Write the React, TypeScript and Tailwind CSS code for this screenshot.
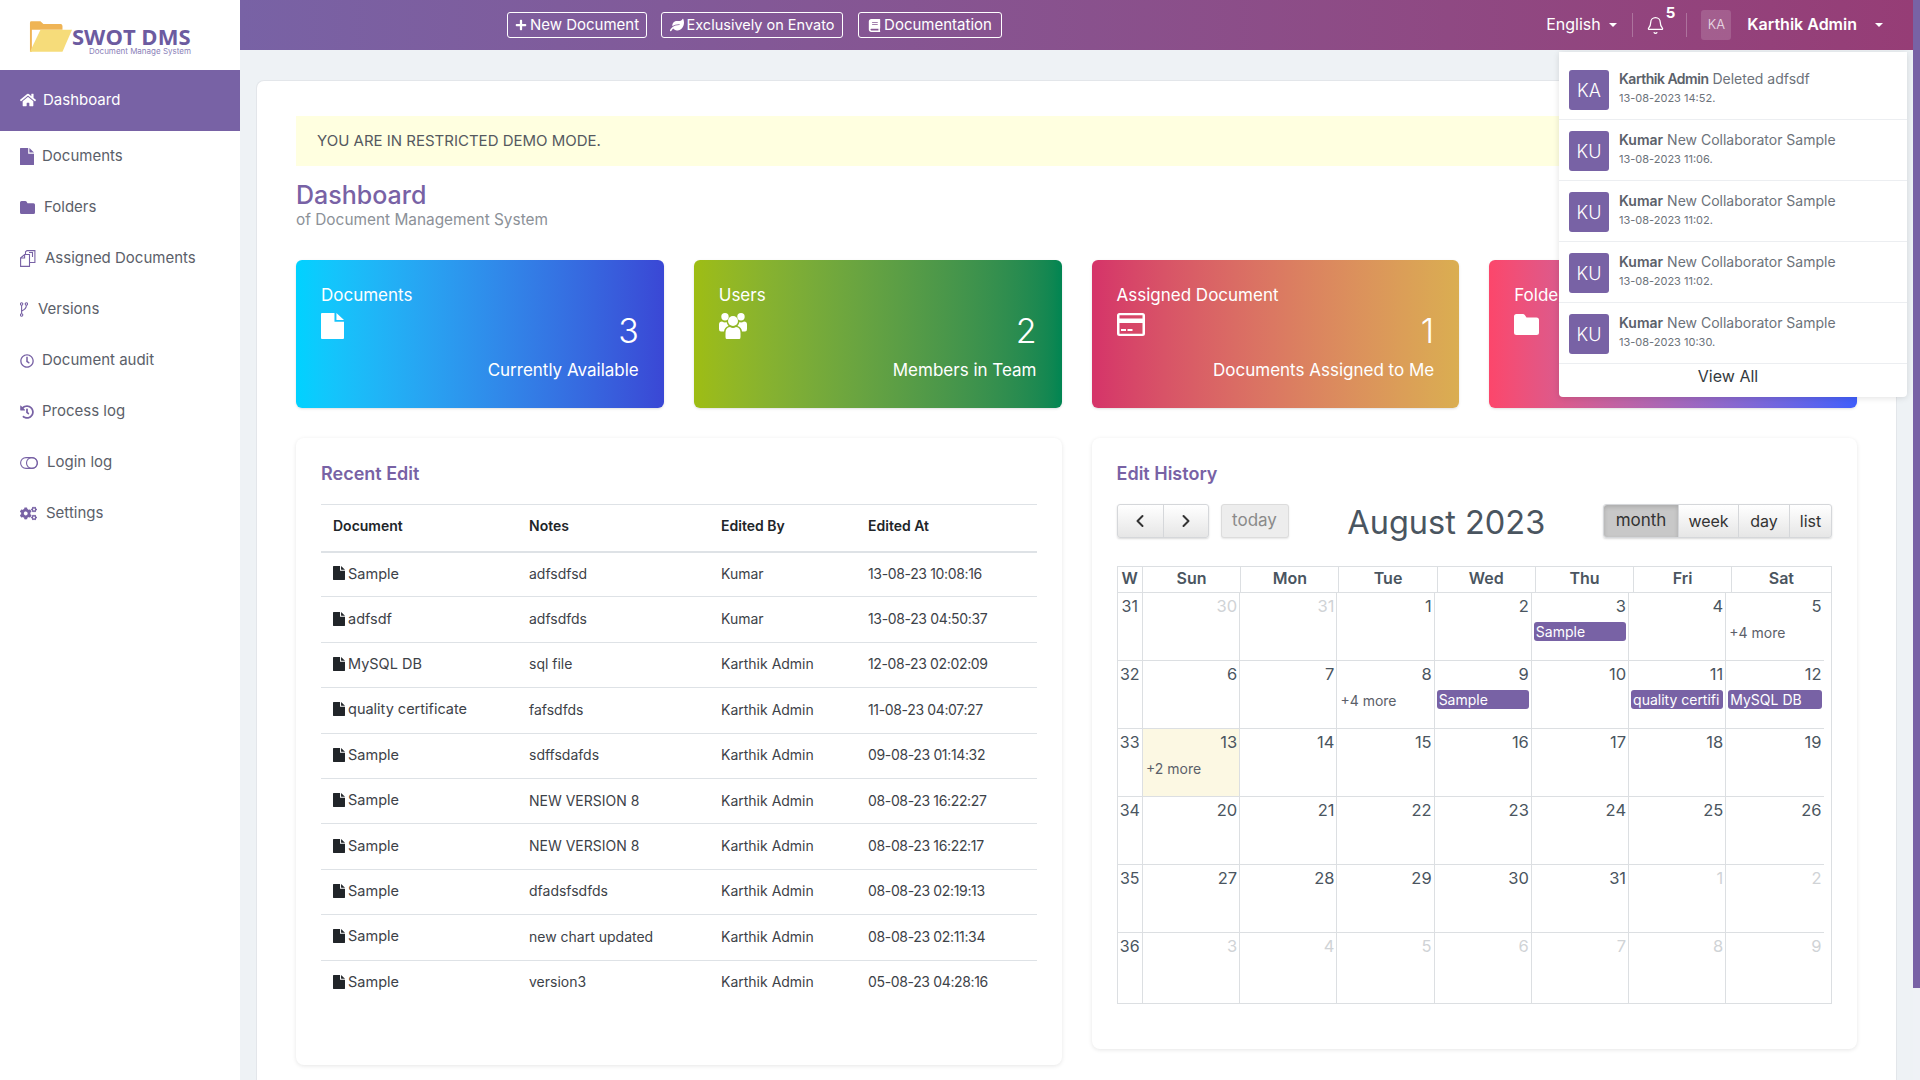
import React from "react";
import { FaHome, FaRegClock, FaHistory, FaCogs, FaPlus, FaLeaf, FaBook } from "react-icons/fa";
import { Bell, ChevronLeft, ChevronRight } from "lucide-react";

function FileIcon({ className }: { className?: string }) {
  return (
    <svg viewBox="0 0 14 17" preserveAspectRatio="none" fill="currentColor" className={className}>
      <path d="M0.6 0H8.2V5.8H14V16.4Q14 17 13.4 17H0.6Q0 17 0 16.4V0.6Q0 0 0.6 0Z" />
      <path d="M9.4 0L14 4.6H9.4Z" />
    </svg>
  );
}

function FolderIcon({ className }: { className?: string }) {
  return (
    <svg viewBox="0 0 25 21" preserveAspectRatio="none" fill="currentColor" className={className}>
      <path d="M0 2.5Q0 0 2.5 0H9Q10 0 10.8 1L12.5 3.5H22.5Q25 3.5 25 6V18.5Q25 21 22.5 21H2.5Q0 21 0 18.5Z" />
    </svg>
  );
}

function CopyIcon() {
  return (
    <svg width="16" height="17" viewBox="0 0 16 17" fill="none" stroke="currentColor" strokeWidth="1.1">
      <path d="M5.5 4.5V1.8L7 0.6H14.9V12.5H9.5" />
      <path d="M0.6 8L4.6 4.5H9.5V16.4H0.6Z" />
      <path d="M4.6 4.5V8H0.6" />
      <path d="M9 2.5H12.5V7" />
    </svg>
  );
}

function ForkIcon() {
  return (
    <svg width="8" height="15" viewBox="0 0 8 15" fill="none" stroke="currentColor" strokeWidth="1.1">
      <circle cx="1.6" cy="2" r="1.2" />
      <circle cx="6.4" cy="2" r="1.2" />
      <circle cx="1.6" cy="13" r="1.2" />
      <path d="M1.6 3.2V11.8" />
      <path d="M6.4 3.2Q6.4 7 1.6 9" />
    </svg>
  );
}

function ToggleIcon() {
  return (
    <svg width="18" height="12" viewBox="0 0 18 12" fill="none" stroke="currentColor" strokeWidth="1.1">
      <rect x="0.6" y="0.6" width="16.8" height="10.8" rx="5.4" />
      <circle cx="11.9" cy="6" r="5.4" />
    </svg>
  );
}

function UsersIcon() {
  return (
    <svg width="28" height="26" viewBox="0 0 28 26" fill="white">
      <circle cx="6" cy="3.8" r="3.7" />
      <circle cx="22" cy="3.8" r="3.7" />
      <circle cx="14" cy="8" r="5" />
      <path d="M7.5 26Q6.5 26 6.5 24V20Q6.5 14.5 11 14Q14 16 17 14Q21.5 14.5 21.5 20V24Q21.5 26 20.5 26Z" />
      <path d="M0 16V11.5Q0 8.5 3 8.5Q6 10 7.5 9Q8 11 9.5 13Q5.5 14 5 18.5H2Q0 18.5 0 16Z" />
      <path d="M28 16V11.5Q28 8.5 25 8.5Q22 10 20.5 9Q20 11 18.5 13Q22.5 14 23 18.5H26Q28 18.5 28 16Z" />
    </svg>
  );
}

function CardIcon() {
  return (
    <svg width="28" height="23" viewBox="0 0 28 23" fill="white">
      <path fillRule="evenodd" d="M2.5 0H25.5Q28 0 28 2.5V20.5Q28 23 25.5 23H2.5Q0 23 0 20.5V2.5Q0 0 2.5 0ZM2.5 2.2V5.5H25.5V2.2ZM2.5 10V20.8H25.5V10Z" />
      <rect x="4" y="16" width="5" height="2" />
      <rect x="10.5" y="16" width="5" height="2" />
    </svg>
  );
}

const nav = [
  { label: "Documents", ml: "ml-[8px]", icon: <FileIcon className="w-[14px] h-[17px]" /> },
  { label: "Folders", ml: "ml-[9px]", icon: <FolderIcon className="w-[15px] h-[13px]" /> },
  { label: "Assigned Documents", ml: "ml-[9px]", icon: <CopyIcon /> },
  { label: "Versions", ml: "ml-[10px]", icon: <ForkIcon /> },
  { label: "Document audit", ml: "ml-[8px]", icon: <FaRegClock className="text-[14px]" /> },
  { label: "Process log", ml: "ml-[8px]", icon: <FaHistory className="text-[14px]" /> },
  { label: "Login log", ml: "ml-[9px]", icon: <ToggleIcon /> },
  { label: "Settings", ml: "ml-[9px]", icon: <FaCogs className="text-[17px]" /> },
];

const rows = [
  ["Sample", "adfsdfsd", "Kumar", "13-08-23 10:08:16"],
  ["adfsdf", "adfsdfds", "Kumar", "13-08-23 04:50:37"],
  ["MySQL DB", "sql file", "Karthik Admin", "12-08-23 02:02:09"],
  ["quality certificate", "fafsdfds", "Karthik Admin", "11-08-23 04:07:27"],
  ["Sample", "sdffsdafds", "Karthik Admin", "09-08-23 01:14:32"],
  ["Sample", "NEW VERSION 8", "Karthik Admin", "08-08-23 16:22:27"],
  ["Sample", "NEW VERSION 8", "Karthik Admin", "08-08-23 16:22:17"],
  ["Sample", "dfadsfsdfds", "Karthik Admin", "08-08-23 02:19:13"],
  ["Sample", "new chart updated", "Karthik Admin", "08-08-23 02:11:34"],
  ["Sample", "version3", "Karthik Admin", "05-08-23 04:28:16"],
];

const notes = [
  ["KA", "Karthik Admin", "Deleted adfsdf", "13-08-2023 14:52."],
  ["KU", "Kumar", "New Collaborator Sample", "13-08-2023 11:06."],
  ["KU", "Kumar", "New Collaborator Sample", "13-08-2023 11:02."],
  ["KU", "Kumar", "New Collaborator Sample", "13-08-2023 11:02."],
  ["KU", "Kumar", "New Collaborator Sample", "13-08-2023 10:30."],
];

const weeks: { w: number; h: string; days: [number, boolean][] }[] = [
  { w: 31, h: "h-[68px]", days: [[30, true], [31, true], [1, false], [2, false], [3, false], [4, false], [5, false]] },
  { w: 32, h: "h-[68px]", days: [[6, false], [7, false], [8, false], [9, false], [10, false], [11, false], [12, false]] },
  { w: 33, h: "h-[68px]", days: [[13, false], [14, false], [15, false], [16, false], [17, false], [18, false], [19, false]] },
  { w: 34, h: "h-[68px]", days: [[20, false], [21, false], [22, false], [23, false], [24, false], [25, false], [26, false]] },
  { w: 35, h: "h-[68px]", days: [[27, false], [28, false], [29, false], [30, false], [31, false], [1, true], [2, true]] },
  { w: 36, h: "h-[70px]", days: [[3, true], [4, true], [5, true], [6, true], [7, true], [8, true], [9, true]] },
];

const events: Record<string, string> = { "31-3": "Sample", "32-9": "Sample", "32-11": "quality certifi", "32-12": "MySQL DB" };
const more: Record<string, string> = { "31-5": "+4 more", "32-8": "+4 more", "33-13": "+2 more" };

function Stat({ title, icon, num, cap, bg }: { title: string; icon: React.ReactNode; num?: string; cap?: string; bg: string }) {
  return (
    <div className={`h-[148px] rounded-[6px] px-[25px] pt-[24px] text-white shadow-sm ${bg}`}>
      <div className="text-[17px] leading-[22px]">{title}</div>
      <div className="flex justify-between items-start mt-[7px] h-[38px]">
        <div>{icon}</div>
        <div className="text-[34px] leading-[38px] -mt-[1px] font-light">{num}</div>
      </div>
      <div className="text-right text-[17px] leading-[22px] mt-[8px]">{cap}</div>
    </div>
  );
}

export default function App() {
  return (
    <div className="flex h-screen overflow-hidden bg-[#eef2f5] font-['Inter','Liberation_Sans',sans-serif] text-[14px]">
      <aside className="w-[240px] shrink-0 bg-white">
        <div className="h-[70px] flex items-start pl-[29px] pt-[20px]">
          <svg width="44" height="33" viewBox="0 0 46 34" className="shrink-0">
            <path d="M1 33V2.5Q1 1 2.5 1H12L15 4H33Q35 4 35 6V10H3V33Z" fill="#efb455" />
            <path d="M12 10H45L35 33H1Z" fill="#f6dc7a" />
          </svg>
          <div className="-ml-[1px] pt-[7px]">
            <div className="text-[22px] leading-[18px] font-bold font-['Open_Sans',sans-serif] text-[#6c5ba0] whitespace-nowrap">SWOT DMS</div>
            <div className="text-[8px] leading-[6px] mt-[3px] ml-[17px] text-[#8a80b8] whitespace-nowrap">Document Manage System</div>
          </div>
        </div>
        <div className="h-[61px] bg-[#7862a5] text-white flex items-center pl-[20px] text-[15px]">
          <FaHome className="text-[16px] -mt-[2px]" />
          <span className="ml-[7px]">Dashboard</span>
        </div>
        <nav>
          {nav.map((n) => (
            <div key={n.label} className="h-[51px] flex items-center pl-[20px] text-[15px] text-[#5b6069]">
              <span className="text-[#7862a5] flex items-center">{n.icon}</span>
              <span className={n.ml}>{n.label}</span>
            </div>
          ))}
        </nav>
      </aside>

      <div className="flex-1 min-w-0 relative flex flex-col">
        <header className="h-[50px] shrink-0 flex items-center bg-gradient-to-r from-[#7862a5] to-[#963d76] text-white relative z-20">
          <div className="flex gap-[14px] ml-[267px]">
            <a className="h-[26px] w-[140px] flex items-center justify-center gap-[3px] border border-white rounded-[3px] text-[15px]"><FaPlus className="text-[12px]" />New Document</a>
            <a className="h-[26px] w-[182px] flex items-center justify-center gap-[3px] border border-white rounded-[3px] text-[14.5px]"><FaLeaf className="text-[14px]" />Exclusively on Envato</a>
            <a className="h-[26px] w-[144px] ml-[1px] flex items-center justify-center gap-[3px] border border-white rounded-[3px] text-[15px]"><FaBook className="text-[13px]" />Documentation</a>
          </div>
          <div className="ml-auto flex items-center h-full pr-[30px]">
            <span className="text-[16px] -mt-[2px]">English</span>
            <span className="ml-[8px] border-x-[4px] border-x-transparent border-t-[4px] border-t-white" />
            <span className="ml-[15px] w-px h-[24px] bg-white/25" />
            <span className="ml-[13px] flex"><Bell size={19} strokeWidth={1.6} /></span>
            <span className="text-[15px] font-bold ml-[1px] -mt-[24px]">5</span>
            <span className="ml-[11px] w-px h-[24px] bg-white/25" />
            <span className="ml-[14px] w-[30px] h-[30px] rounded-[3px] bg-white/15 flex items-center justify-center text-[13px] font-light text-white/80">KA</span>
            <span className="ml-[16px] text-[16px] font-semibold -mt-[2px]">Karthik Admin</span>
            <span className="ml-[18px] border-x-[4px] border-x-transparent border-t-[4px] border-t-white" />
          </div>
        </header>

        <div className="absolute z-10 top-[52px] left-[1319px] w-[348px] h-[345px] bg-white rounded-b-[4px] shadow-[0_1px_6px_rgba(0,0,0,0.12)]">
          {notes.map((n, i) => (
            <div key={i} className={`${i === 0 ? "h-[68px] pt-[18px]" : "h-[61px] pt-[11px]"} border-b border-[#eceef1] flex px-[10px]`}>
              <div className="w-[40px] h-[40px] rounded-[3px] bg-[#7862a5] text-white flex items-center justify-center text-[18px] font-light">{n[0]}</div>
              <div className="ml-[10px] -mt-[1px]">
                <div className="text-[14px] leading-[20px] text-[#6c727a] whitespace-nowrap">
                  <b className={`font-semibold text-[#5b616a] ${i === 0 ? "tracking-[-0.5px]" : ""}`}>{n[1]}</b> {n[2]}
                </div>
                <div className="text-[11px] leading-[16px] mt-[1px] text-[#6c727a]">{n[3]}</div>
              </div>
            </div>
          ))}
          <div className="text-center text-[16px] text-[#343a40] pr-[10px] leading-[24px]">View All</div>
        </div>

        <main className="flex-1 min-h-0 overflow-hidden pl-[16px] pr-[16px] pt-[30px]">
          <div className="bg-white rounded-t-[8px] border border-[#e3e6ea] border-b-0 px-[39px] pt-[35px] h-[1200px]">
            <div className="h-[50px] bg-[#ffffe0] flex items-center pl-[21px] text-[15px] text-[#55595f]">YOU ARE IN RESTRICTED DEMO MODE.</div>
            <h1 className="text-[25px] leading-[30px] font-medium text-[#7862a5] mt-[14px]">Dashboard</h1>
            <div className="text-[15.4px] leading-[20px] text-[#8c9198]">of Document Management System</div>

            <div className="grid grid-cols-4 gap-[30px] mt-[30px]">
              <Stat title="Documents" num="3" cap="Currently Available" bg="bg-gradient-to-r from-[#00d2ff] to-[#3a47d5]" icon={<FileIcon className="w-[23px] h-[26px]" />} />
              <Stat title="Users" num="2" cap="Members in Team" bg="bg-gradient-to-r from-[#9ebd13] to-[#008552]" icon={<UsersIcon />} />
              <Stat title="Assigned Document" num="1" cap="Documents Assigned to Me" bg="bg-gradient-to-r from-[#d53369] to-[#daae51]" icon={<CardIcon />} />
              <Stat title="Folders" bg="bg-gradient-to-r from-[#fc466b] to-[#3f5efb]" icon={<FolderIcon className="w-[25px] h-[21px] mt-[1px]" />} />
            </div>

            <div className="grid grid-cols-2 gap-[30px] mt-[30px] items-start">
              <section className="h-[627px] rounded-[8px] bg-white shadow-[0_1px_4px_rgba(0,0,0,0.1)] px-[25px] pt-[25px]">
                <h2 className="text-[18px] leading-[22px] font-semibold text-[#7862a5]">Recent Edit</h2>
                <table className="w-full mt-[19px] text-[14px] text-[#3d4248] table-fixed border-t border-[#dee2e6]">
                  <thead>
                    <tr className="h-[47px] border-b-2 border-[#dee2e6] text-left text-[#212529]">
                      <th className="w-[196px] pl-[12px] pb-[4px] font-semibold">Document</th>
                      <th className="w-[192px] pl-[12px] pb-[4px] font-semibold">Notes</th>
                      <th className="w-[147px] pl-[12px] pb-[4px] font-semibold">Edited By</th>
                      <th className="pl-[12px] pb-[4px] font-semibold">Edited At</th>
                    </tr>
                  </thead>
                  <tbody>
                    {rows.map((r, i) => (
                      <tr key={i} className={`h-[45.4px] ${i < rows.length - 1 ? "border-b border-[#dee2e6]" : ""}`}>
                        <td className="pl-[12px] pb-[2px]"><span className="flex items-center gap-[3px] whitespace-nowrap text-[14.5px]"><FileIcon className="w-[12px] h-[14px] text-[#212529]" />{r[0]}</span></td>
                        <td className="pl-[12px] pb-[2px] whitespace-nowrap">{r[1]}</td>
                        <td className="pl-[12px] pb-[2px] whitespace-nowrap">{r[2]}</td>
                        <td className="pl-[12px] pb-[2px] whitespace-nowrap tracking-[-0.35px]">{r[3]}</td>
                      </tr>
                    ))}
                  </tbody>
                </table>
              </section>

              <section className="h-[611px] rounded-[8px] bg-white shadow-[0_1px_4px_rgba(0,0,0,0.1)] pl-[25px] pr-[25px] pt-[25px]">
                <h2 className="text-[18px] leading-[22px] font-semibold text-[#7862a5]">Edit History</h2>
                <div className="flex items-center mt-[19px] h-[34px]">
                  <div className="flex w-[92px] h-[34px] rounded-[3px] border border-[#d5d7da] bg-gradient-to-b from-white to-[#e6e6e6] shadow-[0_1px_2px_rgba(0,0,0,0.15)] text-[#333]">
                    <span className="w-[46px] flex items-center justify-center border-r border-[#d5d7da]"><ChevronLeft size={20} strokeWidth={2.4} /></span>
                    <span className="flex-1 flex items-center justify-center"><ChevronRight size={20} strokeWidth={2.4} /></span>
                  </div>
                  <div className="ml-[12px] w-[68px] h-[34px] rounded-[3px] border border-[#dcdcdc] bg-[#ededed] text-[17px] text-[#8a8a8a] flex items-center justify-center shadow-[0_1px_2px_rgba(0,0,0,0.1)]">today</div>
                  <div className="flex-1 text-center text-[32.5px] text-[#4a5560] leading-[38px] mt-[3px] pl-[1px]">August 2023</div>
                  <div className="flex h-[34px] w-[229px] rounded-[3px] border border-[#d5d7da] text-[16px] text-[#333] bg-gradient-to-b from-white to-[#e6e6e6] shadow-[0_1px_2px_rgba(0,0,0,0.15)]">
                    <span className="w-[75px] flex items-center justify-center text-[17px] bg-[#c8c8c8] rounded-l-[3px] border-r border-[#d5d7da] shadow-[inset_0_2px_4px_rgba(0,0,0,0.15)]">month</span>
                    <span className="w-[60px] flex items-center justify-center border-r border-[#d5d7da]">week</span>
                    <span className="w-[51px] flex items-center justify-center border-r border-[#d5d7da]">day</span>
                    <span className="flex-1 flex items-center justify-center">list</span>
                  </div>
                </div>

                <div className="mt-[28px] w-[715px] border border-[#dcdfe2] text-[#4a5560]">
                  <div className="grid grid-cols-[25.5px_repeat(7,1fr)] h-[26px] border-b border-[#dcdfe2] text-[16px] font-semibold text-center leading-[23px]">
                    {["W", "Sun", "Mon", "Tue", "Wed", "Thu", "Fri", "Sat"].map((d, i) => (
                      <div key={d} className={i < 7 ? "border-r border-[#dcdfe2]" : ""}>{d}</div>
                    ))}
                  </div>
                  <div className="pr-[7px]">
                    {weeks.map((w, wi) => (
                      <div key={w.w} className={`grid grid-cols-[25.5px_repeat(7,1fr)] ${w.h} ${wi < weeks.length - 1 ? "border-b border-[#dcdfe2]" : ""}`}>
                        <div className="border-r border-[#dcdfe2] text-center text-[16px] leading-[26px]">{w.w}</div>
                        {w.days.map(([d, off], i) => {
                          const key = `${w.w}-${d}`;
                          const today = w.w === 33 && d === 13;
                          const ev = !off ? events[key] : undefined;
                          const m = !off ? more[key] : undefined;
                          return (
                            <div key={i} className={`${i < 6 ? "border-r border-[#dcdfe2]" : ""} ${today ? "bg-[#fcf8e3]" : ""}`}>
                              <div className={`text-right text-[16.5px] leading-[26px] pr-[2px] ${off ? "text-[#d0d3d6]" : "text-[#4a5560]"}`}>{d}</div>
                              {ev && <div className="mx-[2px] mt-[3px] h-[19px] rounded-[3px] bg-[#7862a5] text-white text-[14px] leading-[19px] px-[2px] overflow-hidden whitespace-nowrap">{ev}</div>}
                              {m && <div className="ml-[3px] mt-[4px] text-[14px] leading-[20px] text-[#5b6069]">{m}</div>}
                            </div>
                          );
                        })}
                      </div>
                    ))}
                  </div>
                </div>
              </section>
            </div>
          </div>
        </main>
      </div>

      <div className="w-[7px] shrink-0 bg-[#eff2f6]">
        <div className="h-[988px] bg-[#7862a5]" />
      </div>
    </div>
  );
}
